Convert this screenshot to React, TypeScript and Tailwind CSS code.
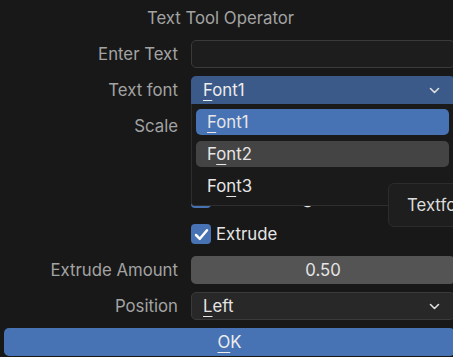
import React from 'react';

const Chevron = () => (
    <svg width="11" height="7" viewBox="0 0 11 7" className="shrink-0">
        <polyline points="1.5,1.5 5.5,5.5 9.5,1.5" fill="none" stroke="#e0e0e0" strokeWidth="1.6" strokeLinecap="round" strokeLinejoin="round" />
    </svg>
);

const Check = () => (
    <svg width="15" height="13" viewBox="0 0 15 13">
        <polyline points="2,7 5.8,10.8 13,2.2" fill="none" stroke="#ffffff" strokeWidth="2.5" strokeLinecap="round" strokeLinejoin="round" />
    </svg>
);

// first letter (or given index) gets the accelerator underline
const Accel: React.FC<{ text: string; at?: number }> = ({ text, at = 0 }) => (
    <span>
        {text.slice(0, at)}
        <span className="underline decoration-1 underline-offset-[4px]">{text[at]}</span>
        {text.slice(at + 1)}
    </span>
);

const Row: React.FC<{ label?: string; children?: React.ReactNode }> = ({ label, children }) => (
    <div className="grid grid-cols-[178px_264px] gap-x-[13px] h-[28px] items-center">
        <div className="text-right text-[#a3a3a3] whitespace-nowrap">{label}</div>
        <div className="h-full flex items-center">{children}</div>
    </div>
);

const Checkbox: React.FC<{ label?: string }> = ({ label }) => (
    <div className="flex items-center gap-[5px] text-[#e6e6e6]">
        <div className="w-[20px] h-[20px] rounded-[4px] bg-[#4772b3] flex items-center justify-center">
            <Check />
        </div>
        {label && <span>{label}</span>}
    </div>
);

export default function App() {
    return (
        <div className="relative w-[453px] h-[357px] overflow-hidden bg-[#181818] font-['Inter',sans-serif] text-[16.75px] leading-none">
            <div className="flex flex-col gap-2 pt-1">
                <div className="h-[28px] flex items-center justify-center pr-[12px] text-[#a3a3a3]">Text Tool Operator</div>

                <Row label="Enter Text">
                    <div className="w-full h-full rounded-[5px] border border-[#3a3a3a] bg-[#1d1d1d]" />
                </Row>

                <Row label="Text font">
                    <div className="w-full h-full rounded-t-[5px] bg-[#3b5a89] flex items-center justify-between pl-[12px] pr-[15px] text-[#ededed]">
                        <Accel text="Font1" />
                        <Chevron />
                    </div>
                </Row>

                <Row label="Scale">
                    <div className="w-full h-full rounded-[5px] bg-[#545454]" />
                </Row>

                <Row>
                    <Checkbox />
                </Row>

                <Row>
                    <Checkbox label="Use Kerning" />
                </Row>

                <Row>
                    <Checkbox label="Extrude" />
                </Row>

                <Row label="Extrude Amount">
                    <div className="w-full h-full rounded-[5px] bg-[#545454] flex items-center justify-center text-[#e6e6e6]">0.50</div>
                </Row>

                <Row label="Position">
                    <div className="w-full h-full rounded-[5px] border border-[#3a3a3a] bg-[#282828] flex items-center justify-between pl-[11px] pr-[14px] text-[#e6e6e6]">
                        <Accel text="Left" />
                        <Chevron />
                    </div>
                </Row>

                <div className="ml-[4px] w-[451px] h-[28px] rounded-[5px] bg-[#4772b3] flex items-center justify-center text-[#ededed]">
                    <Accel text="OK" />
                </div>
            </div>

            {/* open dropdown menu */}
            <div className="absolute left-[191px] top-[104px] w-[263px] h-[102px] bg-[#1a1a1a] border border-t-0 border-[#2e2e2e] rounded-b-[4px] px-[4px] pt-[5px] flex flex-col gap-[6px] text-[#e6e6e6]">
                <div className="h-[26px] rounded-[5px] bg-[#4772b3] flex items-center pl-[11px]">
                    <Accel text="Font1" />
                </div>
                <div className="h-[26px] rounded-[5px] bg-[#444444] flex items-center pl-[11px]">
                    <Accel text="Font2" at={1} />
                </div>
                <div className="h-[26px] flex items-center pl-[11px]">
                    <Accel text="Font3" at={2} />
                </div>
            </div>

            {/* tooltip */}
            <div className="absolute left-[388px] top-[183px] w-[110px] h-[44px] bg-[#1e1e1e] border border-[#2c2c2c] rounded-[6px] flex items-center pl-[18px] text-[#dcdcdc]">
                Textfont
            </div>
        </div>
    );
}
